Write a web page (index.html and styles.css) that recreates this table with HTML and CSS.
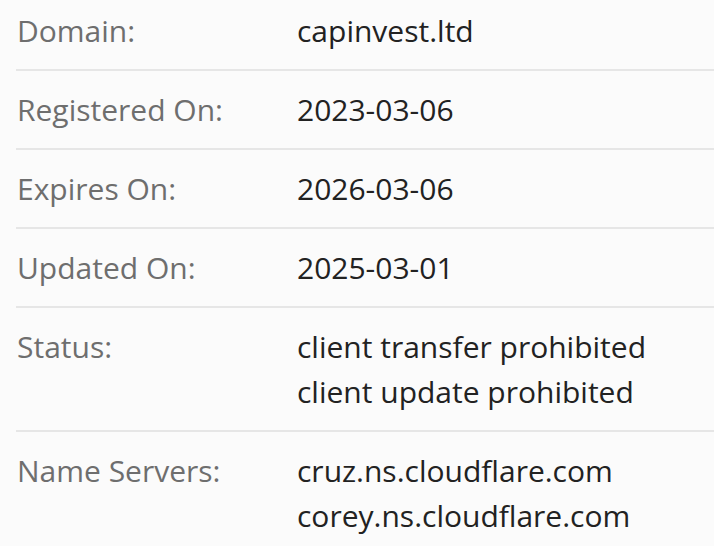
FILE: index.html
```html
<!DOCTYPE html>
<html>
<head>
<meta charset="utf-8">
<link rel="stylesheet" href="styles.css">
</head>
<body>
<div class="info">
  <div class="row"><div class="label">Domain:</div><div class="value">capinvest.ltd</div></div>
  <div class="row"><div class="label">Registered On:</div><div class="value">2023-03-06</div></div>
  <div class="row"><div class="label">Expires On:</div><div class="value">2026-03-06</div></div>
  <div class="row"><div class="label">Updated On:</div><div class="value">2025-03-01</div></div>
  <div class="row"><div class="label">Status:</div><div class="value">client transfer prohibited<br>client update prohibited</div></div>
  <div class="row"><div class="label">Name Servers:</div><div class="value">cruz.ns.cloudflare.com<br>corey.ns.cloudflare.com</div></div>
</div>
</body>
</html>
```
FILE: styles.css
```css
html, body {
  margin: 0;
  padding: 0;
  background: #fbfbfb;
}
body {
  font-family: "Open Sans", sans-serif;
  font-size: 30px;
  line-height: 45px;
  overflow: hidden;
}
.info {
  margin-top: -8px;
  margin-left: 16px;
}
.row {
  display: grid;
  grid-template-columns: 280px 1fr;
  padding: 16px 0 16px 1px;
  border-bottom: 2px solid #e6e6e6;
}
.label {
  color: #6e6e6e;
}
.value {
  color: #222222;
}
```
